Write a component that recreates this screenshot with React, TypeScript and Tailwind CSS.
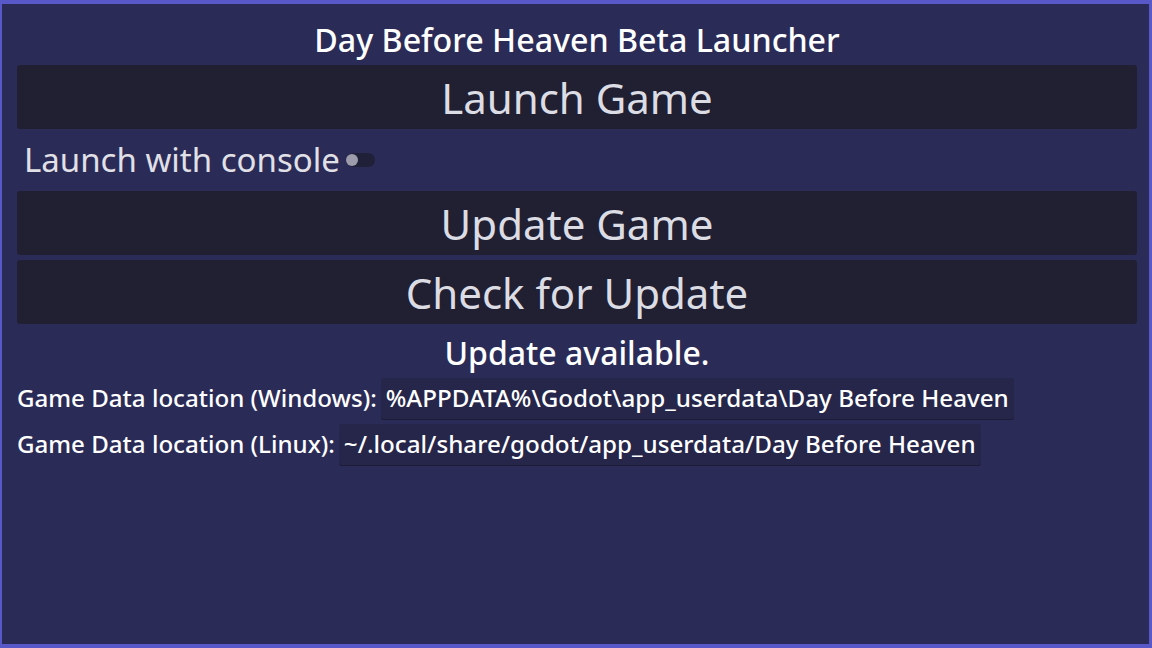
export default function App() {
  const font = { fontFamily: '"Noto Sans", "Open Sans", sans-serif' }
  return (
    <div
      style={font}
      className="h-[648px] w-[1152px] overflow-hidden border-t-4 border-r-[3px] border-b-4 border-l-2 border-[#5858c8] bg-[#2b2b58]"
    >
      <div className="flex flex-col pr-[12px] pl-[15px] pt-[12px]">
        <h1 className="mb-[1px] text-center text-[32.2px] font-medium leading-[48px] text-white">
          Day Before Heaven Beta Launcher
        </h1>
        <GameButton label="Launch Game" />
        <div className="flex items-center py-[14px] pl-[7px]">
          <span className="text-[33px] leading-[34px] text-[#e0e0e6]">Launch with console</span>
          <span className="ml-[6px] flex h-[14px] w-[29px] items-center rounded-full bg-[#202038]">
            <span className="h-[12px] w-[12px] rounded-full bg-[#9c9cac]" />
          </span>
        </div>
        <div className="flex flex-col gap-[5px]">
          <GameButton label="Update Game" />
          <GameButton label="Check for Update" />
        </div>
        <p className="mt-[10px] text-center text-[32px] font-medium leading-[38px] text-white">
          Update available.
        </p>
        <div className="mt-[6px] flex flex-col gap-[5px]">
          <PathRow label="Game Data location (Windows):" path="%APPDATA%\Godot\app_userdata\Day Before Heaven" />
          <PathRow label="Game Data location (Linux):" path="~/.local/share/godot/app_userdata/Day Before Heaven" />
        </div>
      </div>
    </div>
  )
}

function GameButton({ label }: { label: string }) {
  return (
    <button className="flex h-[64px] w-full items-center justify-center rounded-[3px] bg-[#202032] text-[42px] text-[#dcdce4]">
      {label}
    </button>
  )
}

function PathRow({ label, path }: { label: string; path: string }) {
  return (
    <div className="flex items-center gap-[4px]">
      <span className="text-[24.1px] font-medium text-white">{label}</span>
      <span className="flex h-[41px] items-center rounded-[3px] bg-[#26264a] pr-[5px] pl-[5px] text-[24.2px] font-medium text-white shadow-[0_1px_0_#1c1c38]">
        {path}
      </span>
    </div>
  )
}
